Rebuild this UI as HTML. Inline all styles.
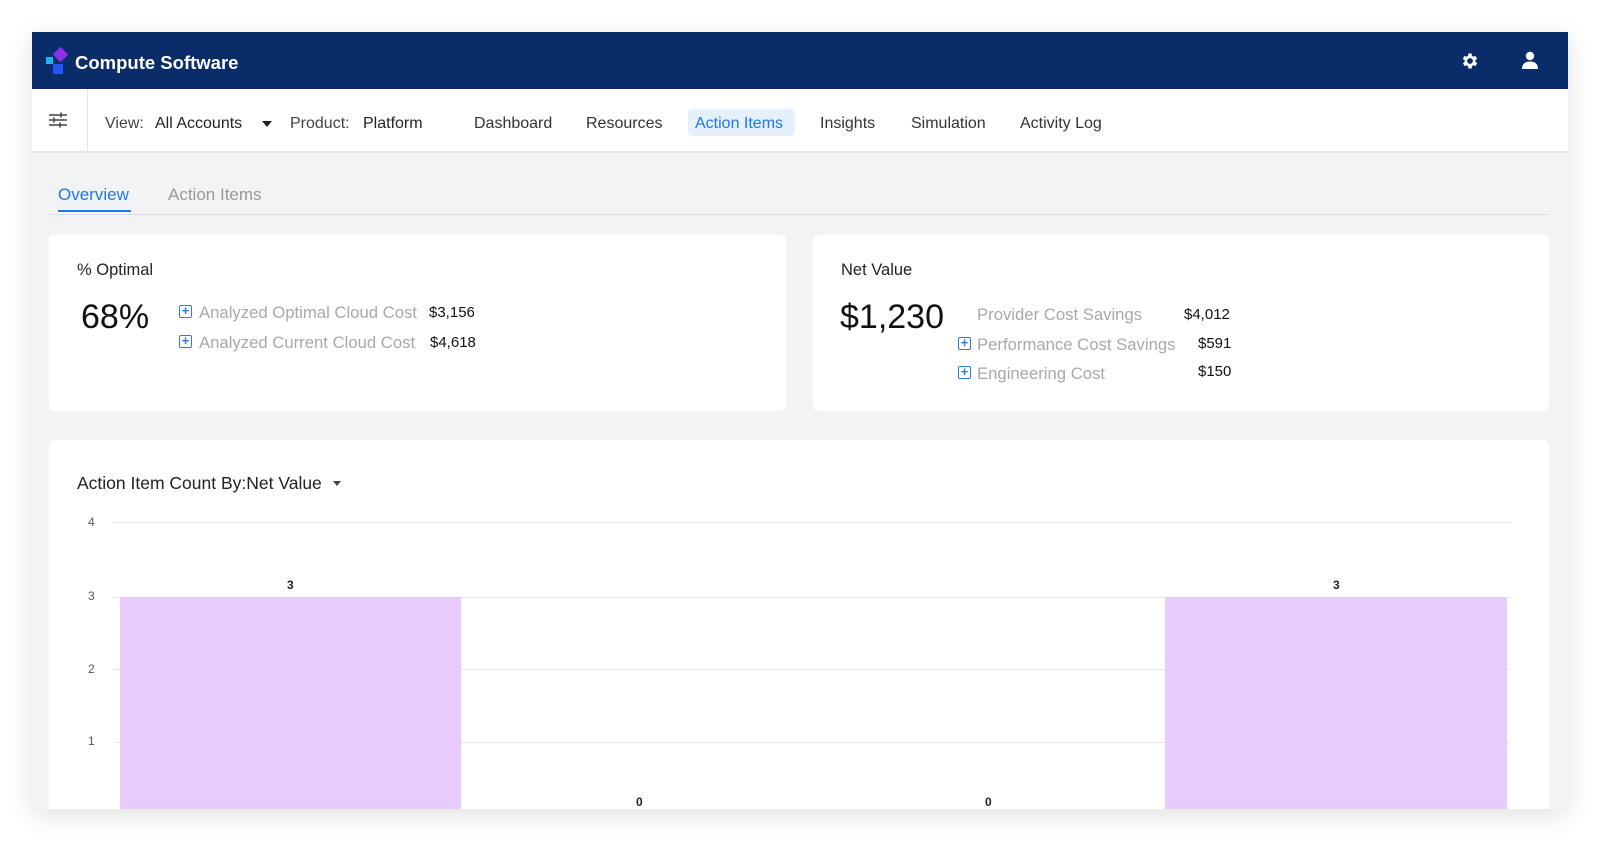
<!DOCTYPE html>
<html><head><meta charset="utf-8"><style>
*{box-sizing:border-box;margin:0;padding:0}
body{width:1600px;height:841px;background:#fff;position:relative;overflow:hidden;font-family:"Liberation Sans",sans-serif}
.win{position:absolute;left:32px;top:32px;width:1536px;height:777px;background:#f2f3f5;overflow:hidden;box-shadow:0 6px 24px rgba(0,0,0,.12)}
.a{position:absolute;white-space:nowrap}
.hdr{position:absolute;left:0;top:0;width:1536px;height:57px;background:#0a2d69}
.nav{position:absolute;left:0;top:57px;width:1536px;height:64px;background:#fff;border-bottom:2px solid #e3e5e8}
.n{font-size:16px;color:#333;top:26px}
.card{position:absolute;background:#fff;border-radius:5px}
.lbl{font-size:16.7px;color:#a9a9a9}
.val{font-size:15px;color:#111}
.plus{width:13px;height:13px;border:1.5px solid #2b7de0;border-radius:2px;color:#2b7de0;font-size:13px;line-height:10px;text-align:center;font-weight:bold}
.yl{font-size:12px;color:#555}
.gl{position:absolute;left:65px;width:1396px;height:1px;background:#e4e4e4}
.bar{position:absolute;background:#e9cafc}
.bl{font-size:12px;font-weight:bold;color:#222}
</style></head><body>
<div class="win">
 <div class="hdr">
  <div class="a" style="left:14px;top:25px;width:7px;height:7px;background:#1fb6ef"></div>
  <div class="a" style="left:21px;top:32px;width:10px;height:10px;background:#2555f0"></div>
  <div class="a" style="left:23px;top:17px;width:11px;height:11px;background:#8b2fe8;transform:rotate(45deg)"></div>
  <div class="a" style="left:43px;top:20px;font-size:18.5px;font-weight:bold;color:#fff">Compute Software</div>
  <svg class="a" style="left:1428px;top:19px" width="20" height="20" viewBox="0 0 24 24"><path fill="#fff" fill-rule="evenodd" d="M19.4 13a7.5 7.5 0 0 0 0-2l2.1-1.6-2-3.5-2.5 1a7 7 0 0 0-1.7-1L15 3h-4l-.4 2.9a7 7 0 0 0-1.7 1l-2.5-1-2 3.5L6.6 11a7.5 7.5 0 0 0 0 2l-2.1 1.6 2 3.5 2.5-1a7 7 0 0 0 1.7 1L11 21h4l.4-2.9a7 7 0 0 0 1.7-1l2.5 1 2-3.5zM13 15.5a3.5 3.5 0 1 1 0-7 3.5 3.5 0 0 1 0 7z" transform="translate(-1 0)"/></svg>
  <svg class="a" style="left:1489px;top:19px" width="18" height="18" viewBox="0 0 18 18"><circle cx="9" cy="5" r="4.2" fill="#fff"/><path d="M1 18c0-5 3-7.5 8-7.5s8 2.5 8 7.5z" fill="#fff"/></svg>
 </div>
 <div class="nav">
  <svg class="a" style="left:17px;top:23px" width="18" height="16" viewBox="0 0 18 16"><g stroke="#444" stroke-width="1.6"><path d="M0 3h18M0 8h18M0 13h18"/><path d="M12 0.5v5M5 5.5v5M11 10.5v5"/></g></svg>
  <div class="a" style="left:55px;top:0;width:1px;height:62px;background:#e3e5e8"></div>
  <div class="a n" style="left:73px;color:#444">View:</div>
  <div class="a n" style="left:123px;color:#222;font-weight:500">All Accounts</div>
  <div class="a" style="left:230px;top:32px;border-left:5px solid transparent;border-right:5px solid transparent;border-top:6px solid #222"></div>
  <div class="a n" style="left:258px;color:#444">Product:</div>
  <div class="a n" style="left:331px;color:#222">Platform</div>
  <div class="a n" style="left:442px">Dashboard</div>
  <div class="a n" style="left:554px">Resources</div>
  <div class="a" style="left:656px;top:20px;width:107px;height:27px;background:#e6f0fc;border-radius:4px"></div>
  <div class="a n" style="left:663px;color:#1e78e6">Action Items</div>
  <div class="a n" style="left:788px">Insights</div>
  <div class="a n" style="left:879px">Simulation</div>
  <div class="a n" style="left:988px">Activity Log</div>
 </div>
 <div class="a" style="left:26px;top:153px;font-size:17px;color:#1e78e6">Overview</div>
 <div class="a" style="left:26px;top:178px;width:73px;height:2px;background:#1e78e6"></div>
 <div class="a" style="left:136px;top:153px;font-size:17px;color:#999">Action Items</div>
 <div class="a" style="left:17px;top:182px;width:1500px;height:1px;background:#dcdee2"></div>

 <div class="card" style="left:17px;top:203px;width:737px;height:176px">
  <div class="a" style="left:28px;top:26px;font-size:16.5px;color:#222">% Optimal</div>
  <div class="a" style="left:32px;top:63px;font-size:34px;color:#111">68%</div>
  <div class="a plus" style="left:130px;top:70px">+</div>
  <div class="a lbl" style="left:150px;top:68px">Analyzed Optimal Cloud Cost</div>
  <div class="a val" style="left:380px;top:69px">$3,156</div>
  <div class="a plus" style="left:130px;top:100px">+</div>
  <div class="a lbl" style="left:150px;top:98px">Analyzed Current Cloud Cost</div>
  <div class="a val" style="left:381px;top:99px">$4,618</div>
 </div>
 <div class="card" style="left:781px;top:203px;width:736px;height:176px">
  <div class="a" style="left:28px;top:26px;font-size:16.5px;color:#222">Net Value</div>
  <div class="a" style="left:27px;top:63px;font-size:34px;color:#111">$1,230</div>
  <div class="a lbl" style="left:164px;top:70px">Provider Cost Savings</div>
  <div class="a val" style="left:371px;top:71px">$4,012</div>
  <div class="a plus" style="left:145px;top:102px">+</div>
  <div class="a lbl" style="left:164px;top:100px">Performance Cost Savings</div>
  <div class="a val" style="left:385px;top:100px">$591</div>
  <div class="a plus" style="left:145px;top:131px">+</div>
  <div class="a lbl" style="left:164px;top:129px">Engineering Cost</div>
  <div class="a val" style="left:385px;top:128px">$150</div>
 </div>

 <div class="card" style="left:17px;top:408px;width:1500px;height:400px">
  <div class="a" style="left:28px;top:33px;font-size:17.5px;color:#222">Action Item Count By:Net Value</div>
  <div class="a" style="left:284px;top:41px;border-left:4.5px solid transparent;border-right:4.5px solid transparent;border-top:5px solid #444"></div>
  <div class="gl" style="top:82px"></div>
  <div class="gl" style="top:157px"></div>
  <div class="gl" style="top:229px"></div>
  <div class="gl" style="top:302px"></div>
  <div class="a yl" style="left:39px;top:75px">4</div>
  <div class="a yl" style="left:39px;top:149px">3</div>
  <div class="a yl" style="left:39px;top:222px">2</div>
  <div class="a yl" style="left:39px;top:294px">1</div>
  <div class="bar" style="left:71px;top:157px;width:341px;height:250px"></div>
  <div class="bar" style="left:1116px;top:157px;width:342px;height:250px"></div>
  <div class="a bl" style="left:238px;top:138px">3</div>
  <div class="a bl" style="left:1284px;top:138px">3</div>
  <div class="a bl" style="left:587px;top:355px">0</div>
  <div class="a bl" style="left:936px;top:355px">0</div>
 </div>
</div>
</body></html>
